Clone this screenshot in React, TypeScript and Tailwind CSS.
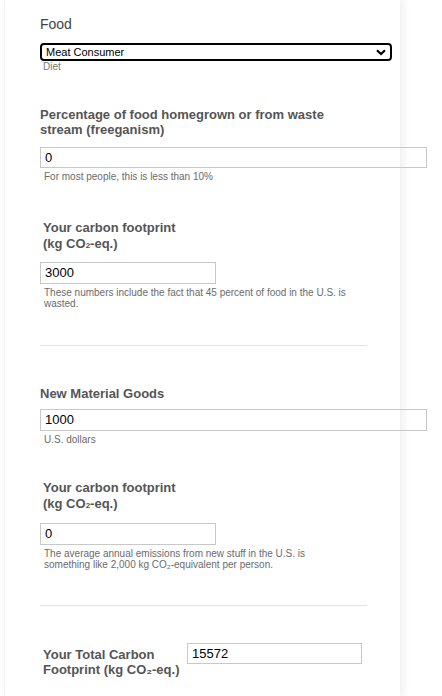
import React from "react";

const font = { fontFamily: '"Liberation Sans", Arial, sans-serif' };

function Sub() {
  return <span className="text-[8px] leading-none">2</span>;
}

export default function App() {
  return (
    <div className="w-[442px] h-[696px] overflow-hidden bg-white" style={font}>
      <div className="ml-[4px] w-[396px] min-h-[696px] bg-white border-l border-[#f2f2f2] shadow-[3px_0_8px_rgba(0,0,0,0.07)] pl-[35px] pt-[15px] text-[#555]">
        {/* Food */}
        <div className="text-[14px] leading-[18px] text-[#444]">Food</div>
        <div className="relative mt-[10px] w-[352px]">
          <div className="h-[18px] border-2 border-black rounded-[4px] flex items-center pl-[4px] text-[11px] text-black">
            Meat Consumer
          </div>
          <svg className="absolute right-[6px] top-[6px]" width="10" height="7" viewBox="0 0 10 7">
            <path d="M1 1.2 L5 5 L9 1.2" fill="none" stroke="black" strokeWidth="2.2" />
          </svg>
        </div>
        <div className="ml-[3px] text-[10px] leading-[12px] text-[#777]">Diet</div>

        {/* Percentage */}
        <div className="mt-[34px] w-[300px] text-[13px] leading-[15px] font-bold">
          Percentage of food homegrown or from waste stream (freeganism)
        </div>
        <div className="mt-[10px] w-[387px] h-[21px] border border-[#c8c8c8] flex items-center pl-[4px] text-[13px] text-black">0</div>
        <div className="mt-[3px] ml-[4px] text-[10px] leading-[12px] text-[#6b6b6b]">For most people, this is less than 10%</div>

        {/* Carbon footprint */}
        <div className="mt-[37px] ml-[3px] text-[13px] leading-[16px] font-bold">
          Your carbon footprint
          <br />
          (kg CO<Sub />-eq.)
        </div>
        <div className="mt-[10px] w-[176px] h-[22px] border border-[#c8c8c8] flex items-center pl-[4px] text-[13px] text-black">3000</div>
        <div className="mt-[3px] ml-[4px] w-[320px] text-[10px] leading-[11px] text-[#6b6b6b]">
          These numbers include the fact that 45 percent of food in the U.S. is wasted.
        </div>

        <div className="mt-[36px] w-[327px] h-px bg-[#e3e3e3]" />

        {/* New Material Goods */}
        <div className="mt-[40px] text-[13px] leading-[16px] font-bold">New Material Goods</div>
        <div className="mt-[7px] w-[387px] h-[22px] border border-[#c8c8c8] flex items-center pl-[4px] text-[13px] text-black">1000</div>
        <div className="mt-[3px] ml-[4px] text-[10px] leading-[12px] text-[#6b6b6b]">U.S. dollars</div>

        <div className="mt-[34px] ml-[3px] text-[13px] leading-[16px] font-bold">
          Your carbon footprint
          <br />
          (kg CO<Sub />-eq.)
        </div>
        <div className="mt-[11px] w-[176px] h-[22px] border border-[#c8c8c8] flex items-center pl-[4px] text-[13px] text-black">0</div>
        <div className="mt-[3px] ml-[4px] w-[300px] text-[10px] leading-[11px] text-[#6b6b6b]">
          The average annual emissions from new stuff in the U.S. is something like 2,000 kg CO₂-equivalent per person.
        </div>

        <div className="mt-[35px] w-[327px] h-px bg-[#e3e3e3]" />

        {/* Total */}
        <div className="mt-[37px] flex items-start">
          <div className="ml-[3px] w-[144px] pt-[4px] text-[13px] leading-[15px] font-bold">
            Your Total Carbon Footprint (kg CO₂-eq.)
          </div>
          <div className="w-[175px] h-[21px] border border-[#c8c8c8] flex items-center pl-[4px] text-[13px] text-black">15572</div>
        </div>
      </div>
    </div>
  );
}
